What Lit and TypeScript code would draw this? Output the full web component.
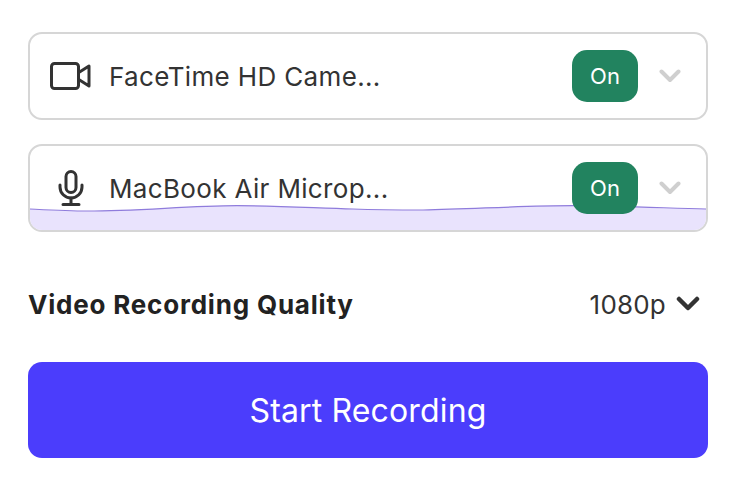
import { LitElement, html, css, svg } from 'lit';
import { customElement, property } from 'lit/decorators.js';

const cameraIcon = svg`
  <rect x="1.5" y="1.5" width="27" height="25" rx="3" fill="none" stroke="#333" stroke-width="3"/>
  <path d="M28 11 L39 4 V24 L28 17" fill="none" stroke="#333" stroke-width="3" stroke-linejoin="round"/>`;

const micIcon = svg`
  <rect x="8" y="1.5" width="10" height="21" rx="5" fill="none" stroke="#333" stroke-width="3"/>
  <path d="M2 15 V17 A11 11 0 0 0 24 17 V15" fill="none" stroke="#333" stroke-width="3" stroke-linecap="round"/>
  <path d="M13 28 V34.5 M5 34.5 H21" fill="none" stroke="#333" stroke-width="3" stroke-linecap="round"/>`;

const waveLine = 'M0 5 C20 6 38 7 57 7 C110 7 155 2 207 1.7 C250 1.7 285 4 323 5 C350 6 370 6 393 6 C445 5 490 1.7 543 1.7 C590 2 635 4 676 5';

@customElement('device-row')
export class DeviceRow extends LitElement {
    @property() label = '';
    @property({ type: Boolean }) wave = false;

    static styles = css`
        :host {
            display: block;
        }

        .row {
            position: relative;
            box-sizing: border-box;
            height: 88px;
            border: 2px solid #d6d6d6;
            border-radius: 14px;
            overflow: hidden;
            display: flex;
            align-items: center;
            padding: 0 25px 0 20px;
            background: #fff;
        }

        .wave {
            position: absolute;
            left: 0;
            bottom: 0;
            width: 100%;
            height: 26px;
        }

        .icon {
            position: relative;
            flex: none;
            width: 41px;
            display: flex;
            justify-content: center;
        }

        .label {
            position: relative;
            flex: 1;
            margin-left: 18px;
            font-size: 26px;
            letter-spacing: 0.35px;
            color: #333;
        }

        .badge {
            position: relative;
            width: 66px;
            height: 52px;
            border-radius: 15px;
            background: #22835f;
            color: #fff;
            font-size: 22px;
            display: flex;
            align-items: center;
            justify-content: center;
            margin-right: 21px;
        }

        .chevron {
            position: relative;
            flex: none;
        }
    `;

    render() {
        return html`
            <div class="row">
                ${this.wave
                    ? html`<svg class="wave" viewBox="0 0 676 26" preserveAspectRatio="none">
                          <path d="${waveLine} V26 H0 Z" fill="#e9e3fd"/>
                          <path d=${waveLine} fill="none" stroke="#8f7cdc" stroke-width="1.2"/>
                      </svg>`
                    : ''}
                <span class="icon"><slot></slot></span>
                <span class="label">${this.label}</span>
                <span class="badge">On</span>
                <svg class="chevron" width="22" height="14" viewBox="0 0 22 14">
                    <path d="M2.5 2.5 L11 11 L19.5 2.5" fill="none" stroke="#cfcfcf" stroke-width="4" stroke-linecap="round" stroke-linejoin="round"/>
                </svg>
            </div>
        `;
    }
}

@customElement('app-root')
export class AppRoot extends LitElement {
    static styles = css`
        :host {
            display: block;
            box-sizing: border-box;
            width: 744px;
            height: 478px;
            padding: 32px 36px 0 28px;
            background: #fff;
            font-family: 'Inter', 'Open Sans', sans-serif;
        }

        .devices {
            display: flex;
            flex-direction: column;
            gap: 24px;
        }

        .quality {
            display: flex;
            align-items: center;
            justify-content: space-between;
            height: 40px;
            margin-top: 52px;
            padding-right: 8px;
        }

        .quality-title {
            font-size: 26px;
            font-weight: 700;
            letter-spacing: 0.8px;
            color: #222;
        }

        .quality-value {
            display: flex;
            align-items: center;
            gap: 10px;
            font-size: 26px;
            letter-spacing: 0.2px;
            color: #333;
        }

        .start {
            display: block;
            width: 100%;
            height: 96px;
            margin-top: 38px;
            border: none;
            border-radius: 14px;
            background: #4b3dfc;
            color: #fff;
            font: inherit;
            font-size: 32px;
            letter-spacing: 0.15px;
            cursor: pointer;
        }
    `;

    render() {
        return html`
            <div class="devices">
                <device-row label="FaceTime HD Came...">
                    <svg width="41" height="28" viewBox="0 0 41 28">${cameraIcon}</svg>
                </device-row>
                <device-row label="MacBook Air Microp..." wave>
                    <svg width="26" height="37" viewBox="0 0 26 37">${micIcon}</svg>
                </device-row>
            </div>
            <div class="quality">
                <span class="quality-title">Video Recording Quality</span>
                <span class="quality-value">
                    1080p
                    <svg width="24" height="16" viewBox="0 0 24 16">
                        <path d="M3 3 L12 12 L21 3" fill="none" stroke="#333" stroke-width="4.5" stroke-linecap="round" stroke-linejoin="round"/>
                    </svg>
                </span>
            </div>
            <button class="start">Start Recording</button>
        `;
    }
}
